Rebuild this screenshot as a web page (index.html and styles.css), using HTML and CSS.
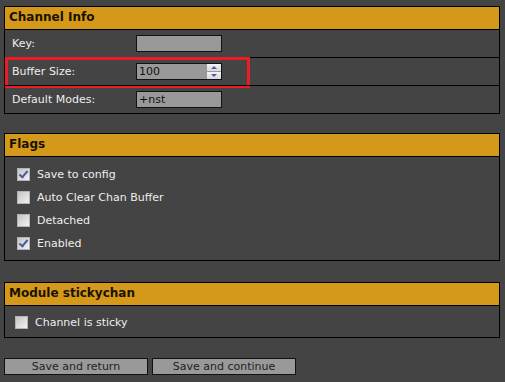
FILE: index.html
```html
<!DOCTYPE html>
<html lang="en" dir="ltr">
  <head>
    <meta charset="utf-8">
    <title>Edit Channel</title>
    <link rel="stylesheet" href="styles.css">
  </head>
  <body>

    <section class="section">
      <h3 class="section-head">Channel Info</h3>
      <div class="field">
        <span class="label">Key:</span>
        <span class="input"></span>
      </div>
      <div class="field marked">
        <span class="label">Buffer Size:</span>
        <span class="input">100
          <span class="spin">
            <i class="up"></i>
            <i class="down"></i>
          </span>
        </span>
        <span class="mark"></span>
      </div>
      <div class="field">
        <span class="label">Default Modes:</span>
        <span class="input">+nst</span>
      </div>
    </section>

    <section class="section flags">
      <h3 class="section-head">Flags</h3>
      <div class="checks">
        <label class="check"><span class="box on"></span>Save to config</label>
        <label class="check"><span class="box"></span>Auto Clear Chan Buffer</label>
        <label class="check"><span class="box"></span>Detached</label>
        <label class="check"><span class="box on"></span>Enabled</label>
      </div>
    </section>

    <section class="section">
      <h3 class="section-head">Module stickychan</h3>
      <div class="checks module">
        <label class="check"><span class="box"></span>Channel is sticky</label>
      </div>
    </section>

    <div class="buttons">
      <span class="btn">Save and return</span>
      <span class="btn">Save and continue</span>
    </div>

  </body>
</html>
```

FILE: styles.css
```css
* { box-sizing: border-box; }
body {
  margin: 0;
  padding: 6px 5px 0 4px;
  background-color: #444;
  color: #eee;
  font-family: 'DejaVu Sans', Verdana, sans-serif;
  font-size: 11px;
}
.section {
  border: 1px solid #000;
  margin-bottom: 19px;
}
.section.flags {
  margin-bottom: 21px;
}
.section-head {
  margin: 0;
  height: 23px;
  padding: 3px 4px;
  background-color: #d4991a;
  color: #1a1200;
  font-size: 12px;
  font-weight: bold;
  border-bottom: 1px solid #000;
}
.field {
  position: relative;
  display: flex;
  align-items: center;
  height: 28px;
  padding-left: 7px;
  border-top: 1px solid #000;
}
.section-head + .field {
  border-top: none;
  height: 27px;
}
.label {
  width: 124px;
}
.input {
  position: relative;
  width: 86px;
  height: 17px;
  padding: 1px 2px;
  background-color: #999;
  border: 1px solid #111;
  color: #111;
  font-size: 11px;
  line-height: 14px;
}
.spin {
  position: absolute;
  right: 0;
  top: 0;
  width: 14px;
  height: 15px;
  display: flex;
  flex-direction: column;
  gap: 1px;
  background-color: #999;
}
.spin i {
  flex: 1;
  position: relative;
  background: linear-gradient(#f4f4f4, #d8d8e0);
}
.spin i::after {
  content: '';
  position: absolute;
  left: 4px;
  border-left: 3px solid transparent;
  border-right: 3px solid transparent;
}
.spin .up::after {
  top: 2px;
  border-bottom: 3px solid #4d5f9a;
}
.spin .down::after {
  top: 2px;
  border-top: 3px solid #4d5f9a;
}
.mark {
  position: absolute;
  left: 0;
  top: -1px;
  width: 245px;
  height: 31px;
  border: 3px solid #ed1c24;
}
.checks {
  display: flex;
  flex-direction: column;
  gap: 10px;
  padding: 11px 12px 10px;
}
.checks.module {
  padding: 10px 10px 8px;
}
.check {
  display: flex;
  align-items: center;
  gap: 7px;
  height: 13px;
}
.box {
  position: relative;
  width: 13px;
  height: 13px;
  border: 1px solid #b4b4b4;
  background: linear-gradient(135deg, #c4c4c4, #f2f2f2);
}
.box.on::after {
  content: '';
  position: absolute;
  left: 3px;
  top: 0px;
  width: 3px;
  height: 7px;
  border-right: 2px solid #4a5aa4;
  border-bottom: 2px solid #4a5aa4;
  transform: rotate(40deg);
}
.buttons {
  display: flex;
  gap: 4px;
  margin-top: 20px;
}
.btn {
  width: 144px;
  height: 17px;
  background-color: #999;
  border: 1px solid #111;
  color: #222;
  text-align: center;
  font-size: 11px;
  line-height: 15px;
}
```
